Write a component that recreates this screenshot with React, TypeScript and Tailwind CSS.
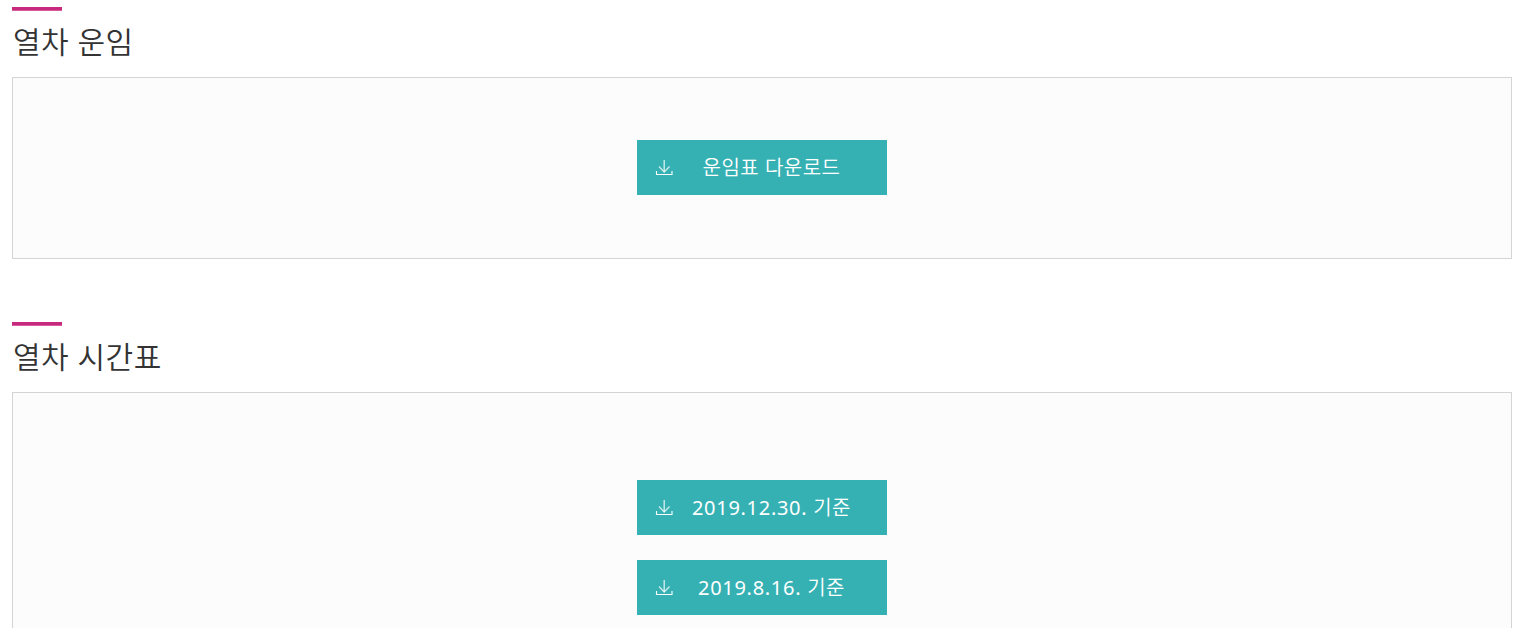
type DownloadButtonProps = {
  date?: string;
  label: string;
};

function DownloadIcon() {
  return (
    <svg width="18" height="16" viewBox="0 0 18 16" fill="none" stroke="currentColor" aria-hidden="true">
      <path d="M9.2 0v12" strokeWidth="1.3" opacity="0.8" />
      <path d="M4 6.5l5.2 5.5 5.3-5.5" strokeWidth="1.3" opacity="0.75" />
      <path d="M1.5 11v3.5H17V11" strokeWidth="1.1" />
    </svg>
  );
}

function DownloadButton({ date, label }: DownloadButtonProps) {
  return (
    <button
      type="button"
      className="flex h-[55px] w-[250px] items-center bg-[#36b1b3] pl-[18px] pr-[27px] text-[20px] font-[350] tracking-[0.5px] text-white"
    >
      <DownloadIcon />
      <span className="flex-1 whitespace-nowrap pl-[10px] text-center leading-[30px]">
        {date && <span className="font-normal tracking-[0.7px]">{date} </span>}
        {label}
      </span>
    </button>
  );
}

function SectionTitle({ children }: { children: React.ReactNode }) {
  return (
    <>
      <div className="h-1 w-[50px] border-b border-[#d95c9c] bg-[#c6297d]" />
      <h2 className="mt-[10px] h-[56px] pl-px text-[30px] font-[350] leading-[42px] tracking-[0.5px] text-[#333]">{children}</h2>
    </>
  );
}

export default function App() {
  return (
    <main className="h-[628px] overflow-hidden bg-white pl-3 pr-[11px] pt-[7px] font-['Noto_Sans','Noto_Sans_CJK_KR',sans-serif]">
      <section>
        <SectionTitle>열차 운임</SectionTitle>
        <div className="flex h-[182px] justify-center border border-[#d4d4d4] bg-[#fcfcfc] pt-[62px]">
          <DownloadButton label="운임표 다운로드" />
        </div>
      </section>

      <section className="mt-[63px]">
        <SectionTitle>열차 시간표</SectionTitle>
        <div className="flex h-[320px] flex-col items-center gap-[25px] border border-[#d4d4d4] bg-[#fcfcfc] pt-[87px]">
          <DownloadButton date="2019.12.30." label="기준" />
          <DownloadButton date="2019.8.16." label="기준" />
        </div>
      </section>
    </main>
  );
}
